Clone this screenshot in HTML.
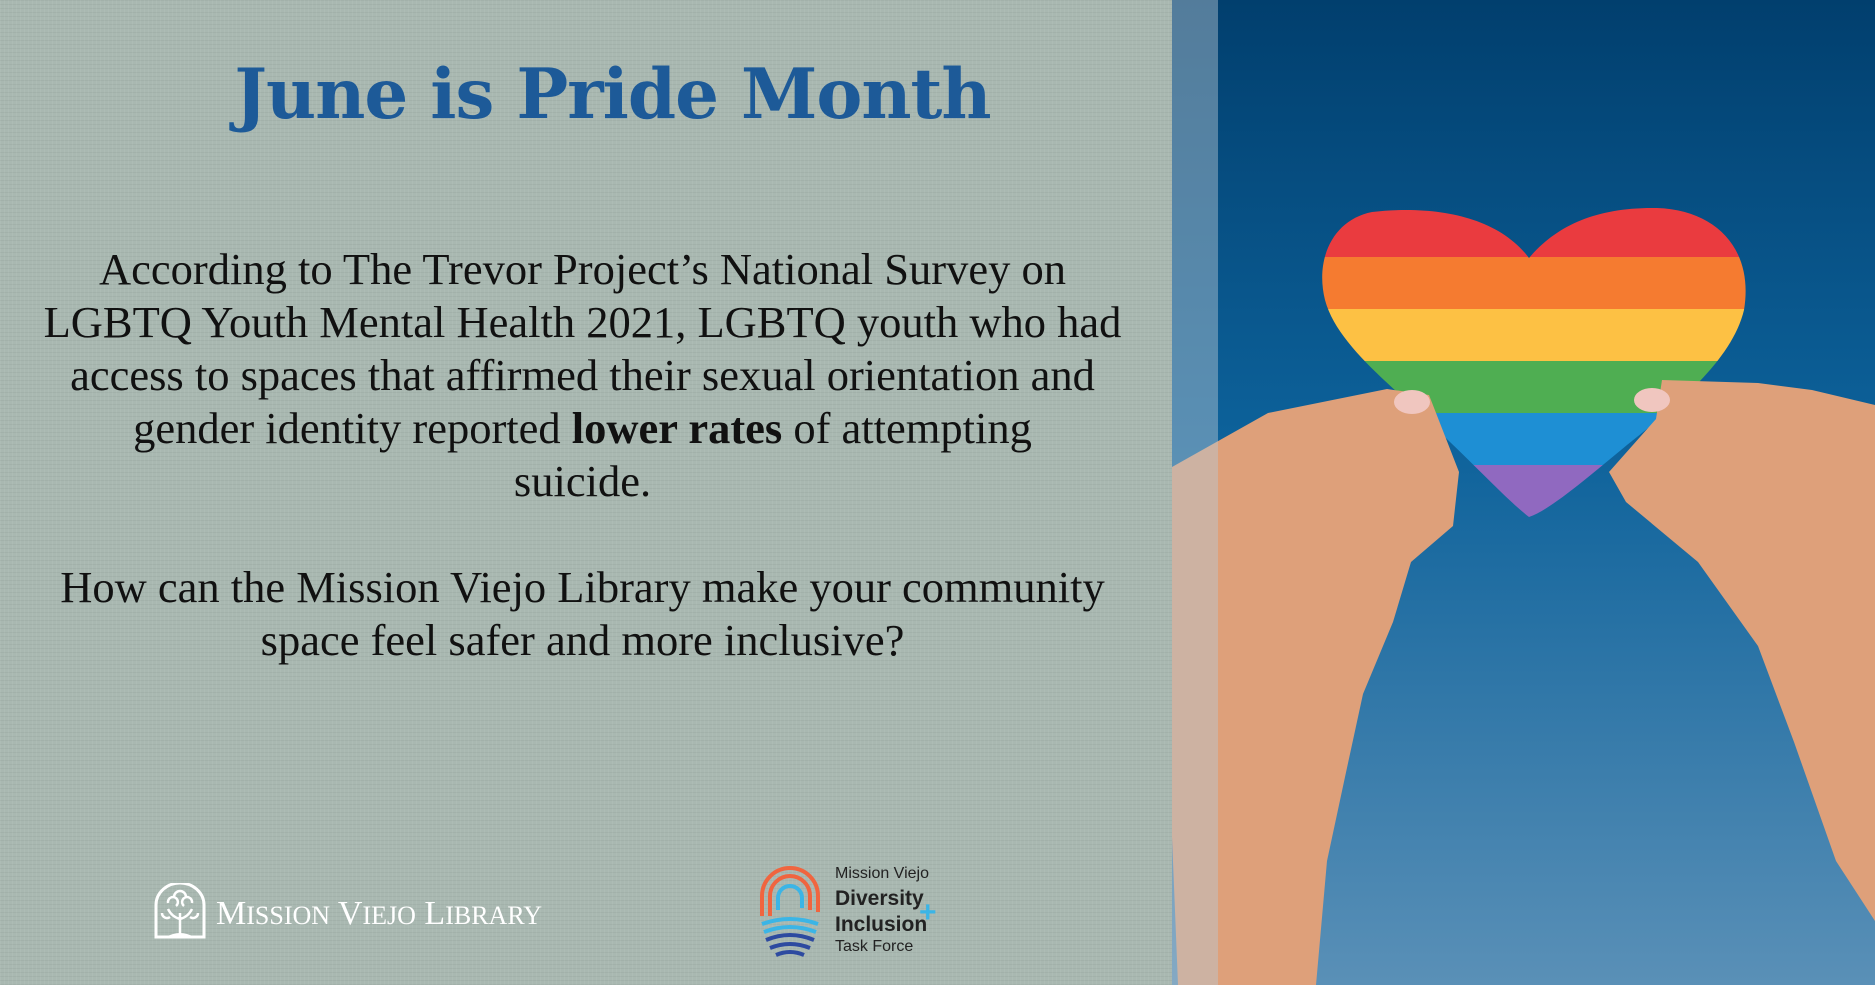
<!DOCTYPE html>
<html><head><meta charset="utf-8"><style>
html,body{margin:0;padding:0;}
body{width:1875px;height:985px;position:relative;overflow:hidden;background:#a8b7b0;font-family:"Liberation Serif",serif;}
.left{position:absolute;left:0;top:0;width:1172px;height:985px;background:
repeating-linear-gradient(90deg,rgba(255,255,255,0.05) 0 1px,transparent 1px 4px),
repeating-linear-gradient(0deg,rgba(0,0,0,0.04) 0 1px,transparent 1px 4px),#a9b8b1;}
h1{position:absolute;left:0;width:1225px;top:54px;margin:0;text-align:center;font-size:69px;font-weight:bold;color:#1d5a98;font-family:"DejaVu Serif","Liberation Serif",serif;letter-spacing:-1px;}
.p{position:absolute;left:0;width:1165px;text-align:center;font-size:44.5px;line-height:53px;color:#111;}
</style></head><body>
<div class="left"></div>
<h1>June is Pride Month</h1>
<div class="p" style="top:243px">According to The Trevor Project’s National Survey on<br>LGBTQ Youth Mental Health 2021, LGBTQ youth who had<br>access to spaces that affirmed their sexual orientation and<br>gender identity reported <b>lower rates</b> of attempting<br>suicide.</div>
<div class="p" style="top:561px">How can the Mission Viejo Library make your community<br>space feel safer and more inclusive?</div>
<svg style="position:absolute;left:154px;top:883px" width="52" height="56" viewBox="0 0 52 56"><path d="M2 54V22A24 22 0 0 1 50 22V54Z" fill="none" stroke="#fff" stroke-width="3"/><path d="M26 54V30M26 36q-8-2-12-10M26 36q8-2 12-10M14 20a5 5 0 1 1 8 3M38 20a5 5 0 1 0-8 3M20 14a6 6 0 0 1 12 0M8 30a5 5 0 0 0 8 4M44 30a5 5 0 0 1-8 4" stroke="#fff" stroke-width="2.5" fill="none"/><path d="M12 54q14-8 28 0" fill="#fff"/></svg>
<div style="position:absolute;left:216px;top:895px;color:#fff;font-size:34px;font-family:'Liberation Serif',serif;letter-spacing:0px">M<span style="font-size:26px">ISSION</span> V<span style="font-size:26px">IEJO</span> L<span style="font-size:26px">IBRARY</span></div>
<svg style="position:absolute;left:756px;top:866px" width="70" height="96" viewBox="0 0 70 96"><g fill="none" stroke-width="4"><path d="M6 50V30a28 28 0 0 1 56 0v16" stroke="#f0653f"/><path d="M14 50V30a20 20 0 0 1 40 0v14" stroke="#f0653f"/><path d="M22 44V32a12 12 0 0 1 24 0v10" stroke="#3bb5e6"/><path d="M6 58q28-10 56 0M8 66q26-10 52 0" stroke="#3bb5e6"/><path d="M10 74q24-10 48 0M14 82q20-8 40 0M20 89q14-6 28 0" stroke="#2d4aa0"/></g></svg>
<div style="position:absolute;left:835px;top:866px;font-family:'Liberation Sans',sans-serif;color:#222;line-height:1">
<div style="font-size:16px">Mission Viejo</div>
<div style="font-size:21px;font-weight:bold;margin-top:6px">Diversity</div>
<div style="font-size:21px;font-weight:bold;margin-top:5px">Inclusion</div>
<div style="font-size:16px;margin-top:4px">Task Force</div>
<div style="position:absolute;left:84px;top:32px;color:#3bb5e6;font-size:30px;font-weight:bold">+</div></div>
<svg style="position:absolute;left:1172px;top:0" width="703" height="985" viewBox="0 0 703 985">
<defs><linearGradient id="sky" x1="0" y1="0" x2="0" y2="1"><stop offset="0" stop-color="#013f6e"/><stop offset="0.45" stop-color="#0d629b"/><stop offset="1" stop-color="#5a90b7"/></linearGradient>
<clipPath id="h"><path d="M357 258C325 215 260 205 200 212C160 220 143 260 153 300C165 345 220 385 260 425C300 462 335 500 357 517C378 510 415 478 455 445C505 405 560 360 572 310C582 250 545 210 485 208C425 207 385 225 357 258Z"/></clipPath></defs>
<rect width="703" height="985" fill="url(#sky)"/>
<g clip-path="url(#h)"><rect x="100" y="200" width="500" height="57" fill="#ea3b3f"/><rect x="100" y="257" width="500" height="52" fill="#f57b30"/><rect x="100" y="309" width="500" height="52" fill="#fdc144"/><rect x="100" y="361" width="500" height="52" fill="#4fae52"/><rect x="100" y="413" width="500" height="52" fill="#1e8fd4"/><rect x="100" y="465" width="500" height="55" fill="#9069c0"/></g>
<g fill="#dea07a"><path d="M0 467L96 413L215 389L257 395L287 472L281 526L239 562L221 622L191 694L173 777L155 861L144 985H6L0 837Z"/><path d="M703 405L640 390L586 383L490 380L484 419L437 472L454 502L526 562L586 646L622 742L664 861L703 921Z"/></g>
<g fill="#f0c6bf"><ellipse cx="240" cy="402" rx="18" ry="12"/><ellipse cx="480" cy="400" rx="18" ry="12"/></g>
<rect x="0" y="0" width="46" height="985" fill="#b7c8d3" opacity="0.45"/>
</svg>
</body></html>
